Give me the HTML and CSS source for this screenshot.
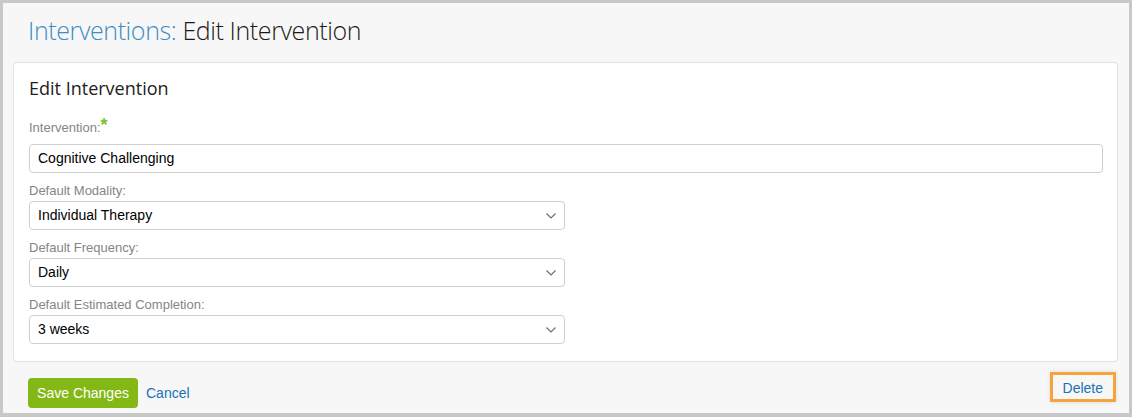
FILE: index.html
```html
<!DOCTYPE html>
<html>
<head>
<meta charset="utf-8">
<link rel="stylesheet" href="styles.css">
</head>
<body>
<div class="frame">
  <h1 class="page-title"><span class="crumb">Interventions:</span> Edit Intervention</h1>
  <div class="card">
    <h2 class="card-title">Edit Intervention</h2>
    <div class="field">
      <label class="label req">Intervention:<span class="star">*</span></label>
      <div class="control wide">Cognitive Challenging</div>
    </div>
    <div class="field">
      <label class="label">Default Modality:</label>
      <div class="control select"><span>Individual Therapy</span><svg class="chev" width="10" height="6" viewBox="0 0 10 6"><path d="M0.5 0.5 L5 5 L9.5 0.5" fill="none" stroke="#6b6b6b" stroke-width="1.1"/></svg></div>
    </div>
    <div class="field">
      <label class="label">Default Frequency:</label>
      <div class="control select"><span>Daily</span><svg class="chev" width="10" height="6" viewBox="0 0 10 6"><path d="M0.5 0.5 L5 5 L9.5 0.5" fill="none" stroke="#6b6b6b" stroke-width="1.1"/></svg></div>
    </div>
    <div class="field last">
      <label class="label">Default Estimated Completion:</label>
      <div class="control select"><span>3 weeks</span><svg class="chev" width="10" height="6" viewBox="0 0 10 6"><path d="M0.5 0.5 L5 5 L9.5 0.5" fill="none" stroke="#6b6b6b" stroke-width="1.1"/></svg></div>
    </div>
  </div>
  <div class="footer">
    <a class="btn">Save Changes</a>
    <a class="link cancel">Cancel</a>
    <a class="link delete">Delete</a>
  </div>
</div>
</body>
</html>
```

FILE: styles.css
```css
* { box-sizing: border-box; }
html, body { margin: 0; padding: 0; background: #c8c8c8; }
.frame {
  width: 1132px;
  height: 417px;
  border: 3px solid #c8c8c8;
  border-bottom-width: 4px;
  background: #f7f7f7;
  padding: 9px 11px 0 10px;
}
.page-title {
  margin: 0 0 14px 0;
  padding-left: 15px;
  font-family: "Open Sans", sans-serif;
  font-weight: 300;
  font-size: 25px;
  letter-spacing: -0.4px;
  line-height: 36px;
  color: #1a1a1a;
}
.crumb { color: #3b8dc4; }
.card {
  background: #fff;
  border: 1px solid #e2e2e2;
  border-radius: 4px;
  padding: 11px 14px 17px 15px;
}
.card-title {
  margin: 0 0 16px 0;
  font-family: "Open Sans", sans-serif;
  font-weight: 400;
  font-size: 18px;
  line-height: 28px;
  color: #222;
}
.field { margin-bottom: 8px; }
.field.last { margin-bottom: 0; }
.label {
  display: block;
  font-family: "Liberation Sans", Arial, sans-serif;
  font-size: 13px;
  line-height: 20px;
  color: #858585;
}
.label.req { padding-bottom: 6px; }
.star {
  color: #7cc130;
  font-size: 18px;
  font-weight: bold;
  line-height: 0;
  position: relative;
  top: -1px;
  margin-left: 0;
}
.control {
  height: 29px;
  border: 1px solid #cfcfcf;
  border-radius: 4px;
  background: #fff;
  padding: 0 8px;
  font-family: "Liberation Sans", Arial, sans-serif;
  font-size: 14px;
  line-height: 27px;
  color: #000;
}
.select {
  width: 536px;
  display: flex;
  align-items: center;
  justify-content: space-between;
}
.chev { display: block; margin-top: 1px; }
.footer {
  display: flex;
  align-items: flex-start;
  padding: 13px 5px 0 15px;
  font-family: "Liberation Sans", Arial, sans-serif;
  font-size: 14px;
}
.btn {
  margin-top: 3px;
  display: block;
  width: 110px;
  height: 30px;
  line-height: 30px;
  text-align: center;
  background: #83b816;
  color: #fff;
  border-radius: 4px;
}
.link { color: #1a72b4; display: block; }
.cancel {
  margin-top: 3px;
  margin-left: 8px;
  line-height: 30px;
}
.delete {
  margin-left: auto;
  padding: 2px 10px 0 10px;
  height: 24px;
  line-height: 22px;
  outline: 3px solid #f5a33c;
  box-shadow: 0 0 4px 3px rgba(0,0,0,0.12);
}
```
